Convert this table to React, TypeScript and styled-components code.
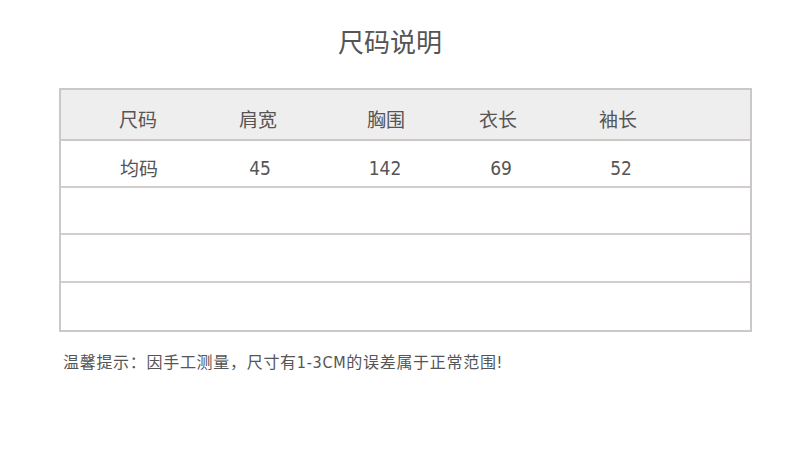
import React from 'react';
import styled, {createGlobalStyle} from 'styled-components';

const GlobalStyle = createGlobalStyle`
  html, body {
    margin: 0;
    padding: 0;
    background: #fff;
  }
  body {
    font-family: "DejaVu Sans Condensed", "Liberation Sans Narrow", "Noto Sans CJK SC", sans-serif;
    color: #555;
  }
`;

const headers = ['尺码', '肩宽', '胸围', '衣长', '袖长'];
const rows: string[][] = [
    ['均码', '45', '142', '69', '52'],
    [],
    [],
    [],
];
const rowHeights = [47, 47, 48, 47];
const shifts = [1, 2, -1, 3, 3];

export default function App() {
    return (
        <Page>
            <GlobalStyle/>
            <Title>尺码说明</Title>
            <Table>
                <HeaderRow>
                    {headers.map((h) => (
                        <Cell key={h}>{h}</Cell>
                    ))}
                </HeaderRow>
                {rows.map((r, i) => (
                    <DataRow key={i} h={rowHeights[i]} last={i === rows.length - 1}>
                        {r.map((v, j) => (
                            <Cell key={j} shift={shifts[j]}>{v}</Cell>
                        ))}
                    </DataRow>
                ))}
            </Table>
            <Note>温馨提示：因手工测量，尺寸有1-3CM的误差属于正常范围!</Note>
        </Page>
    );
}

const Page = styled.div`
  width: 800px;
  height: 452px;
  padding: 28px 0 0 59px;
  box-sizing: border-box;
`;

const Title = styled.div`
  width: 662px;
  text-align: center;
  font-size: 26px;
  line-height: 30px;
  height: 30px;
  color: #555;
  margin-bottom: 30px;
`;

const Table = styled.div`
  width: 693px;
  box-sizing: border-box;
  border: 2px solid #cdc8c8;
`;

const Row = styled.div`
  display: grid;
  grid-template-columns: 120px 120px 136px 88px 152px 1fr;
  padding-left: 17px;
  align-items: center;
  font-size: 19px;
  color: #555;
  box-sizing: border-box;
`;

const HeaderRow = styled(Row)`
  height: 51px;
  padding-top: 8px;
  background: #efeeee;
  border-bottom: 2px solid #cdc8c8;
`;

const DataRow = styled(Row)<{h: number; last?: boolean}>`
  height: ${(p) => p.h}px;
  padding-top: 8px;
  border-bottom: ${(p) => (p.last ? 'none' : '2px solid #d2cece')};
`;

const Cell = styled.div<{shift?: number}>`
  text-align: center;
  white-space: nowrap;
  position: relative;
  left: ${(p) => p.shift || 0}px;
`;

const Note = styled.div`
  margin-top: 21px;
  margin-left: 4px;
  font-size: 16px;
  line-height: 20px;
  letter-spacing: 0.7px;
  color: #555;
`;
